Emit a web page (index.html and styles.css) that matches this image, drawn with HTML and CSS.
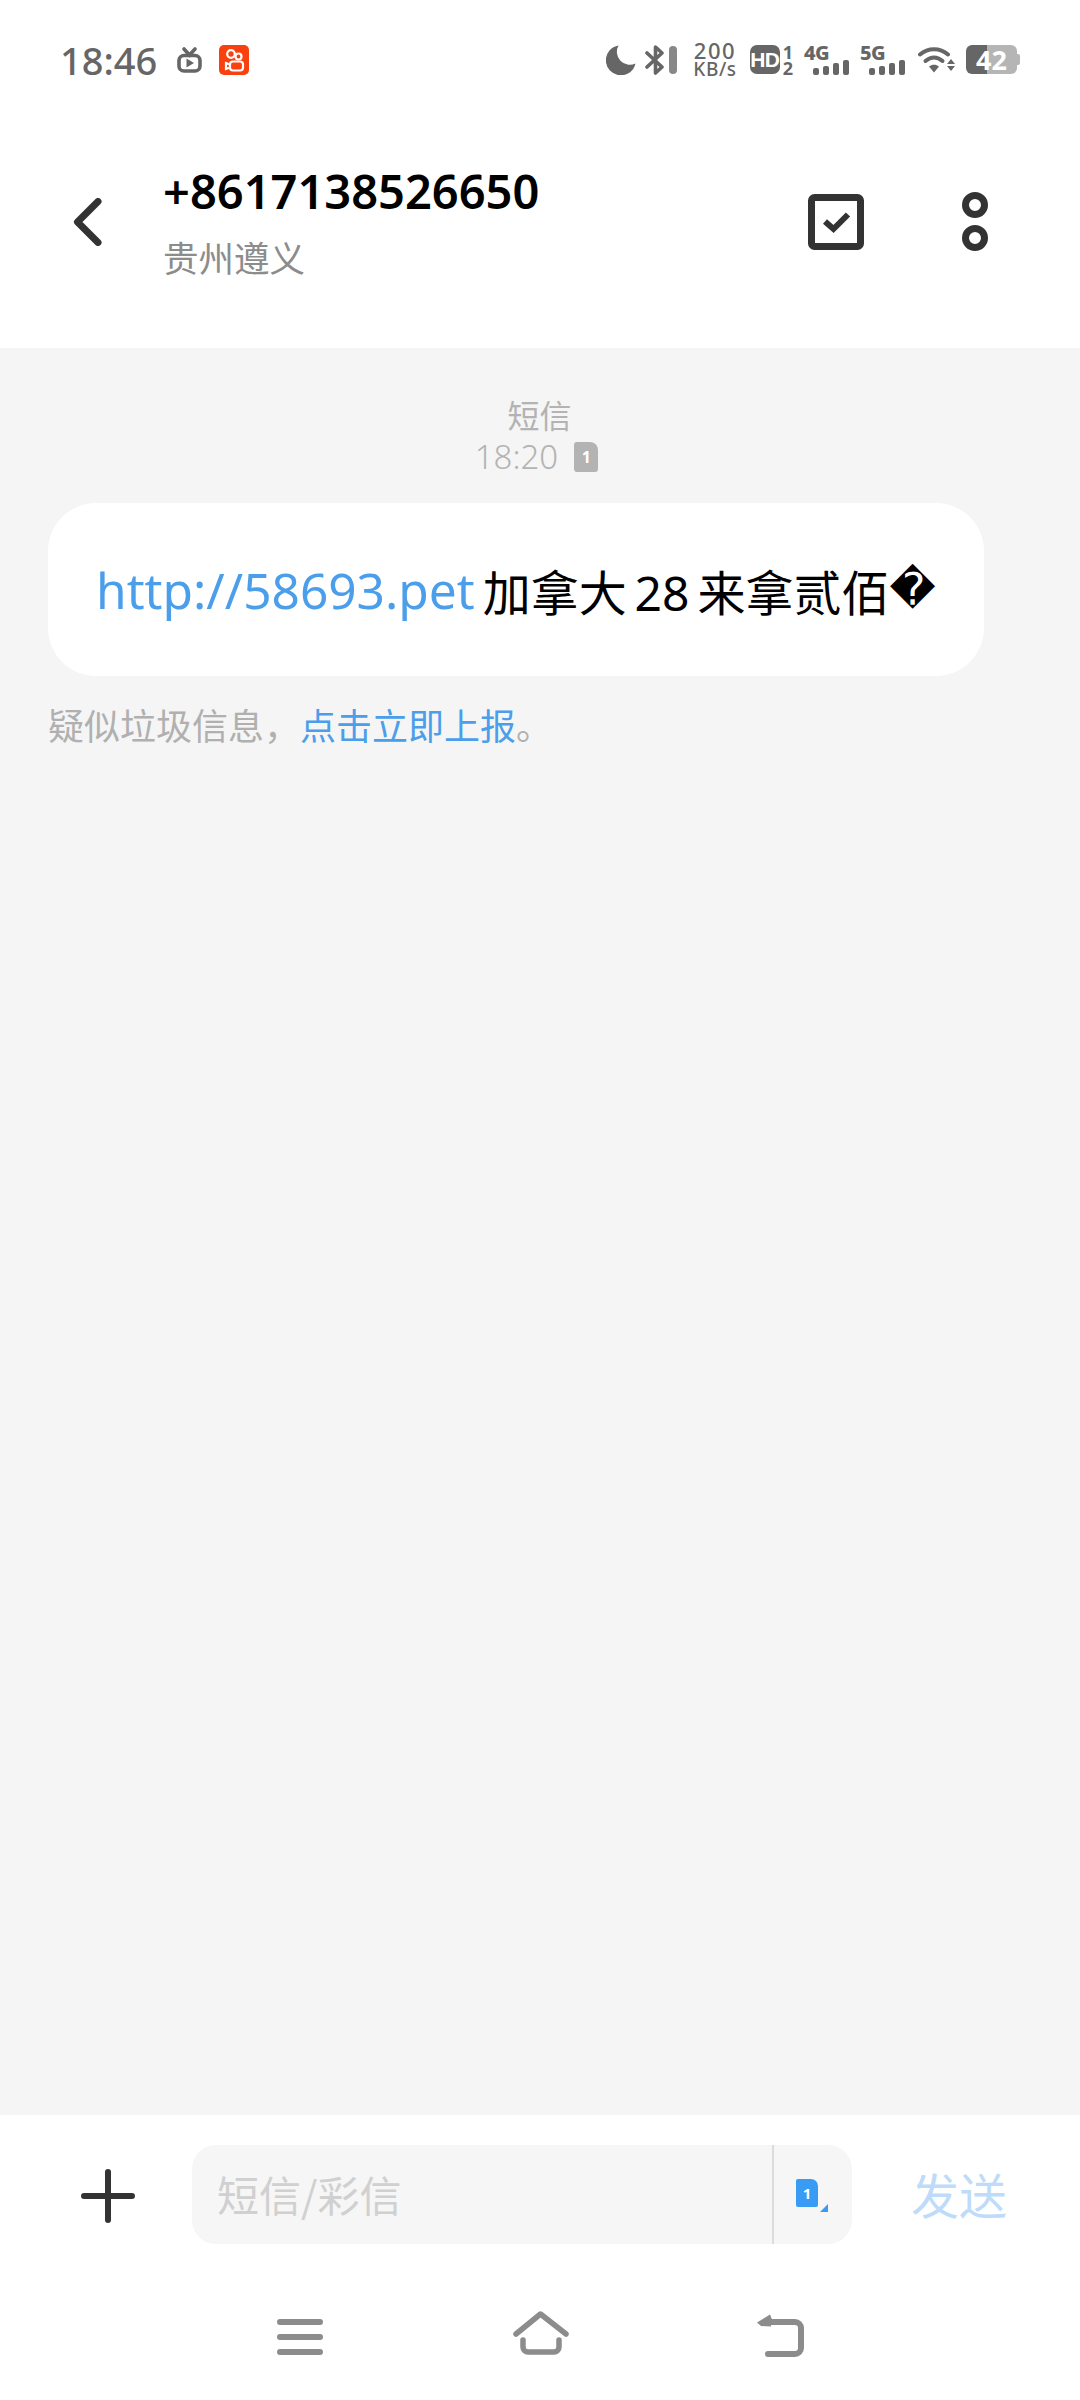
FILE: index.html
```html
<!DOCTYPE html>
<html lang="zh-CN">
<head>
<meta charset="utf-8">
<title>短信</title>
<link rel="stylesheet" href="styles.css">
</head>
<body>
<div class="screen">
  <div class="status">
    <span class="clock">18:46</span>
    <svg class="ic-tv" viewBox="0 0 25 26"><path class="tv-line" d="M7 2l5.500 6L18 2" /><rect class="tv-line" x="2" y="8.500" width="21" height="15.500" rx="5"/><path class="tv-fill" d="M9.500 11.500l7.500 4.500-7.500 4.500z"/></svg>
    <svg class="ic-ks" viewBox="0 0 30 30"><rect class="ks-bg" width="30" height="30" rx="5"/><circle class="ks-line" cx="12" cy="9" r="3.800"/><circle class="ks-line" cx="19.500" cy="11.500" r="3"/><rect class="ks-line" x="11" y="16.500" width="13" height="9" rx="3"/><path class="ks-line" d="M11 19.500l-4-1.500v6l4-1.500"/></svg>
    <span class="spacer"></span>
    <svg class="ic-moon" viewBox="0 0 30 30"><path class="st-fill" d="M12.500 0.500A15 15 0 1 0 29.500 18.500 13 13 0 0 1 12.500 0.500z"/></svg>
    <svg class="ic-bt" viewBox="0 0 32 30"><path class="bt-line" d="M2 8l15 14-6.500 6V2l6.500 6L2 22"/><rect class="bt-bar" x="24" y="1" width="8" height="28" rx="4"/></svg>
    <div class="speed"><span class="speed-num">200</span><span class="speed-unit">KB/s</span></div>
    <div class="hd"><span class="hd-badge">HD</span><div class="hd-nums"><span>1</span><span>2</span></div></div>
    <div class="net"><span class="net-label">4G</span><div class="bars"><i class="b1"></i><i class="b2"></i><i class="b3"></i><i class="b4"></i></div></div>
    <div class="net"><span class="net-label">5G</span><div class="bars"><i class="b1"></i><i class="b2"></i><i class="b3"></i><i class="b4"></i></div></div>
    <svg class="ic-wifi" viewBox="0 0 38 28"><path class="wifi-line" d="M2 8.500C10 1.500 22 1.500 30 8.500"/><path class="wifi-line" d="M7.500 15c5.500-4.500 11.500-4.500 17 0"/><path class="st-fill" d="M11 20.500c3-2.500 7-2.500 10 0L16 26.500z"/><path class="st-fill" d="M33 13l4 5h-8zM29 20h8l-4 5z"/></svg>
    <div class="battery"><span class="batt-num">42</span></div>
  </div>

  <header class="topbar">
    <svg class="ic-back" viewBox="0 0 30 48"><path class="dark-line" d="M26 3.500L5.500 24 26 44.500"/></svg>
    <div class="contact">
      <div class="contact-num">+8617138526650</div>
      <div class="contact-loc">贵州遵义</div>
    </div>
    <svg class="ic-check" viewBox="0 0 56 56"><rect class="dark-line" x="3.500" y="3.500" width="49" height="49" rx="3"/><path class="dark-line thin" d="M17 27.500l8.500 7.500 14.500-14.500"/></svg>
    <svg class="ic-more" viewBox="0 0 26 60"><circle class="dark-line" cx="13" cy="13" r="9.500"/><circle class="dark-line" cx="13" cy="46" r="9.500"/></svg>
  </header>

  <main class="thread">
    <div class="meta">
      <div class="meta-type">短信</div>
      <div class="meta-time">18:20<span class="sim-chip">1</span></div>
    </div>
    <div class="bubble"><span class="link">http://58693.pet</span> 加拿大 28 来拿贰佰<span class="bad">�</span></div>
    <div class="spam">疑似垃圾信息，<span class="spam-link">点击立即上报</span>。</div>
  </main>

  <footer class="bottom">
    <div class="composer">
      <svg class="ic-plus" viewBox="0 0 54 54"><path class="dark-line plus" d="M27 3v48M3 27h48"/></svg>
      <div class="field">
        <span class="placeholder">短信/彩信</span>
        <div class="field-sim"><span class="sim-blue">1</span><i class="sim-corner"></i></div>
      </div>
      <span class="send">发送</span>
    </div>
    <nav class="navbar">
      <svg class="ic-menu" viewBox="0 0 46 36"><path class="nav-line" d="M3 3h40M3 18h40M3 33h40"/></svg>
      <svg class="ic-home" viewBox="0 0 56 46"><path class="nav-line home-line" d="M3 23L27.500 3 53 23M10 29v7a5 5 0 0 0 5 5h26a5 5 0 0 0 5-5v-7"/></svg>
      <svg class="ic-return" viewBox="0 0 48 44"><path class="nav-line" d="M10 9h29a6 6 0 0 1 6 6v20a6 6 0 0 1-6 6H12"/><path class="nav-fill" d="M1 9.500L14 1.500l2 5-1 7-10-.500z"/></svg>
    </nav>
  </footer>
</div>
</body>
</html>
```

FILE: styles.css
```css
* { box-sizing: border-box; }
html, body { margin: 0; padding: 0; background: #fff; }
body { font-family: "Noto Sans", "Noto Sans CJK SC", sans-serif; }
svg { display: block; flex: none; }

.screen { width: 1080px; height: 2400px; display: flex; flex-direction: column; overflow: hidden; }

/* Status bar */
.status { height: 100px; flex: none; display: flex; align-items: center; padding: 19px 63px 0 60px; color: #666; }
.clock { font-size: 38px; font-weight: 500; line-height: 1; width: 117px; }
.st-fill { fill: #666; }
.ic-tv { width: 25px; height: 26px; margin-right: 17px; }
.tv-line { fill: none; stroke: #666; stroke-width: 3.6; stroke-linecap: round; }
.tv-fill { fill: #666; }
.ic-ks { width: 30px; height: 30px; }
.ks-bg { fill: #f9400f; }
.ks-line { fill: none; stroke: #fff; stroke-width: 2.2; }
.spacer { flex: 1; }
.ic-moon { width: 30px; height: 30px; margin-right: 9px; }
.ic-bt { width: 32px; height: 30px; margin-right: 16px; }
.bt-line { fill: none; stroke: #666; stroke-width: 3.6; stroke-linejoin: round; stroke-linecap: round; }
.bt-bar { fill: #888; }
.speed { width: 44px; margin-right: 13px; display: flex; flex-direction: column; align-items: center; }
.speed-num { display: block; font-size: 22px; font-weight: 500; letter-spacing: 1.5px; line-height: 19px; }
.speed-unit { display: block; font-size: 19px; font-weight: 500; letter-spacing: 0.6px; white-space: nowrap; line-height: 18px; }
.hd { display: flex; width: 43px; align-items: center; margin-right: 11px; }
.hd-badge { width: 31px; height: 29px; background: #666; border-radius: 7px; color: #fff; font-size: 21px; font-weight: 800; line-height: 29px; text-align: center; letter-spacing: -0.5px; font-family: "Liberation Sans", sans-serif; }
.hd-nums { display: flex; flex-direction: column; margin-left: 3px; font-size: 18px; font-weight: 700; line-height: 16px; }
.net { width: 45px; margin-right: 11px; height: 30px; display: flex; flex-direction: column; align-items: flex-start; }
.net-label { font-size: 20px; font-weight: 800; line-height: 16px; letter-spacing: -0.5px; height: 14px; }
.bars { display: flex; align-items: flex-end; gap: 4px; margin-left: 9px; height: 16px; }
.bars i { display: block; width: 6px; background: #666; border-radius: 2px; }
.bars .b1 { height: 7px; }
.bars .b2 { height: 9px; }
.bars .b3 { height: 12px; }
.bars .b4 { height: 15px; }
.ic-wifi { width: 38px; height: 28px; margin-right: 10px; margin-left: 2px; }
.wifi-line { fill: none; stroke: #666; stroke-width: 4; stroke-linecap: round; }
.battery { position: relative; width: 51px; height: 29px; border-radius: 6px; background: linear-gradient(90deg, #666 0 42%, #b5b5b5 42%); display: flex; align-items: center; justify-content: center; }
.battery::after { content: ""; position: absolute; right: -3px; top: 9px; width: 3px; height: 11px; border-radius: 0 2px 2px 0; background: #b5b5b5; }
.batt-num { color: #fff; font-size: 27px; font-weight: 700; line-height: 1; }

/* Top bar */
.topbar { height: 248px; flex: none; display: flex; align-items: center; padding-left: 72px; padding-bottom: 4px; }
.ic-back { width: 30px; height: 48px; margin-right: 61px; }
.dark-line { fill: none; stroke: #333; stroke-width: 7; stroke-linecap: round; stroke-linejoin: round; }
.thin { stroke-width: 6; stroke-linecap: butt; stroke-linejoin: miter; }
.contact { flex: 1; display: flex; flex-direction: column; margin-top: 3px; }
.contact-num { font-size: 47px; font-weight: 600; line-height: 66px; color: #000; white-space: nowrap; }
.contact-loc { font-size: 35.500px; line-height: 65px; color: #8c8c8c; font-family: "Noto Sans CJK SC", sans-serif; }
.ic-check { width: 56px; height: 56px; margin-right: 98px; }
.ic-more { width: 26px; height: 60px; margin-right: 92px; }

/* Thread */
.thread { flex: 1; background: #f5f5f5; padding: 0 48px; display: flex; flex-direction: column; align-items: flex-start; }
.meta { width: 984px; height: 155px; padding-top: 45px; display: flex; flex-direction: column; align-items: center; color: #b3b3b3; font-size: 32px; padding-right: 1px; }
.meta-type { line-height: 42px; font-family: "Noto Sans CJK SC", sans-serif; }
.meta-time { line-height: 44px; display: flex; align-items: center; font-weight: 300; font-size: 33px; margin-right: 6px; }
.sim-chip { width: 24px; height: 30px; margin-left: 16px; background: #b3b3b3; color: #fff; font-size: 16px; font-weight: 700; line-height: 30px; text-align: center; border-radius: 3px 8px 3px 3px; }
.bubble { width: 936px; height: 173px; background: #fff; border-radius: 48px; padding-left: 48px; display: flex; align-items: center; white-space: pre; font-size: 48px; color: #000; word-spacing: -4.500px; }
.link { color: #4a9eea; font-size: 49.600px; font-weight: 400; }
.bad { font-family: "DejaVu Sans", sans-serif; font-size: 45px; }
.spam { margin-top: 23px; font-size: 36px; line-height: 50px; color: #b0b0b0; font-family: "Noto Sans CJK SC", sans-serif; }
.spam-link { color: #4a9eea; }

/* Bottom */
.bottom { height: 285px; flex: none; background: #fff; display: flex; flex-direction: column; }
.composer { height: 159px; padding-top: 30px; display: flex; align-items: flex-start; padding-left: 81px; }
.ic-plus { width: 54px; height: 54px; margin-right: 57px; margin-top: 24px; }
.plus { stroke-width: 6; }
.field { width: 660px; height: 99px; background: #f6f6f6; border-radius: 24px; display: flex; align-items: center; justify-content: space-between; padding-left: 25px; }
.placeholder { font-size: 42px; color: #d0d0d0; font-family: "Noto Sans CJK SC", sans-serif; margin-top: -2px; }
.field-sim { position: relative; width: 80px; height: 99px; border-left: 2px solid #dcdcdc; display: flex; align-items: flex-start; padding-left: 22px; padding-top: 34px; }
.sim-blue { width: 22px; height: 28px; background: #3a9bf5; color: #fff; font-size: 15px; font-weight: 700; line-height: 28px; text-align: center; border-radius: 2px 7px 2px 2px; }
.sim-corner { position: absolute; left: 46px; top: 59px; width: 0; height: 0; border-left: 8px solid transparent; border-bottom: 8px solid #3a9bf5; }
.send { margin-left: 59px; margin-top: 20px; font-size: 48px; line-height: 56px; color: #bedcfa; font-family: "Noto Sans CJK SC", sans-serif; }
.navbar { flex: 1; display: flex; align-items: flex-start; padding-left: 277px; padding-top: 37px; }
.nav-line { fill: none; stroke: #8c8c8c; stroke-width: 6; stroke-linecap: round; stroke-linejoin: round; }
.home-line { stroke-width: 5.5; }
.nav-fill { fill: #8c8c8c; }
.ic-menu { width: 46px; height: 36px; margin-top: 8px; }
.ic-home { width: 56px; height: 46px; margin-left: 190px; }
.ic-return { width: 48px; height: 44px; margin-left: 187px; margin-top: 2px; }
```
